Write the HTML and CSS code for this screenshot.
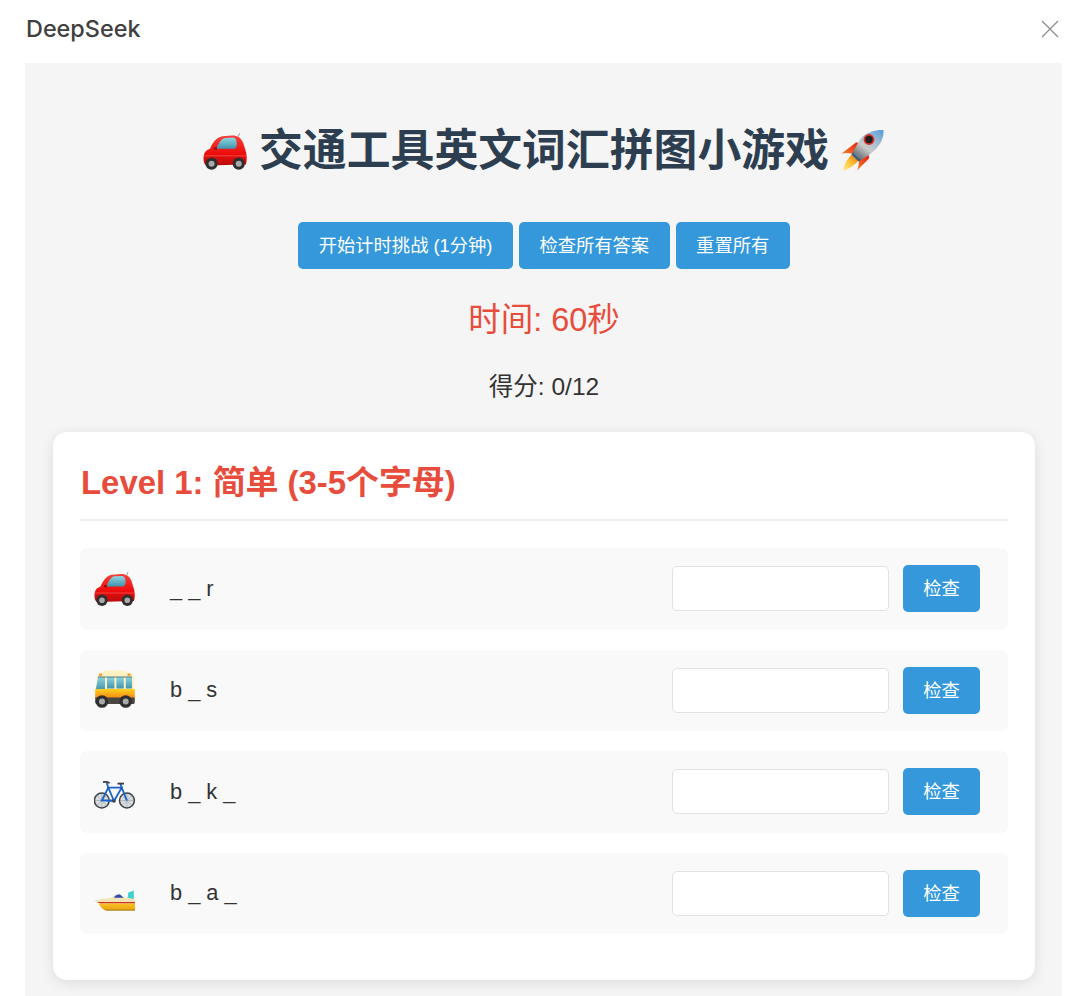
FILE: index.html

```html
<!DOCTYPE html>
<html lang="zh-CN">

<head>
  <meta charset="UTF-8">
  <meta name="viewport" content="width=device-width, initial-scale=1.0">
  <title>DeepSeek</title>
  <link rel="stylesheet" href="styles.css">
</head>

<body>
  <!-- emoji drawings -->
  <svg class="sprites" width="0" height="0" aria-hidden="true">
    <defs>
      <linearGradient id="red" x1="0" y1="0" x2="0" y2="1">
        <stop offset="0" stop-color="#f8403a" />
        <stop offset="0.6" stop-color="#ee0d0d" />
        <stop offset="1" stop-color="#b80b0b" />
      </linearGradient>
      <linearGradient id="glass" x1="0" y1="0" x2="0" y2="1">
        <stop offset="0" stop-color="#8fd6df" />
        <stop offset="1" stop-color="#3f93ad" />
      </linearGradient>
      <linearGradient id="yellow" x1="0" y1="0" x2="0" y2="1">
        <stop offset="0" stop-color="#ffd21f" />
        <stop offset="1" stop-color="#f58a12" />
      </linearGradient>
      <linearGradient id="hull" x1="0" y1="0" x2="0" y2="1">
        <stop offset="0" stop-color="#fcc226" />
        <stop offset="0.7" stop-color="#eda916" />
        <stop offset="1" stop-color="#a8801c" />
      </linearGradient>
      <linearGradient id="steel" x1="0.9" y1="0" x2="0.1" y2="1">
        <stop offset="0" stop-color="#5f9fdc" />
        <stop offset="0.35" stop-color="#a9c0d2" />
        <stop offset="0.6" stop-color="#c9cbc9" />
        <stop offset="1" stop-color="#50585e" />
      </linearGradient>
      <linearGradient id="fin" x1="1" y1="0" x2="0" y2="1">
        <stop offset="0" stop-color="#e3140f" />
        <stop offset="1" stop-color="#f9812a" />
      </linearGradient>
      <linearGradient id="flame" x1="1" y1="0" x2="0" y2="1">
        <stop offset="0" stop-color="#ef5a1a" />
        <stop offset="0.5" stop-color="#fbc02c" />
        <stop offset="1" stop-color="#fff2a8" />
      </linearGradient>
    </defs>

    <symbol id="car" viewBox="0 0 41 41">
      <path d="M33 7l1-3" stroke="#8a8a8a" stroke-width="0.8" />
      <path fill="url(#red)" d="M0.5 28C0.5 23 2 20 6.5 18.5 9 13 12 8 18 6.8L27 6C32 5.9 35.5 8 37.5 13L40.2 22C41 26 41 30 40 33L3 34C1 33 0.5 30 0.5 28Z" />
      <path fill="url(#glass)" d="M12.5 18.5C14.5 13 17 8.8 20.5 8.3L28 8C30.5 8 31.5 11 31.5 14C31.5 16 31 18 29 18.5Z" />
      <path d="M10 17h3v2.4h-3z" fill="#a80808" />
      <rect x="1" y="24.5" width="39" height="1" fill="#ff7a70" opacity="0.5" />
      <circle cx="8" cy="32.3" r="5.7" fill="#2f2f2f" />
      <circle cx="8" cy="32.3" r="2.8" fill="#a9a9a9" />
      <circle cx="33.3" cy="32.3" r="5.7" fill="#2f2f2f" />
      <circle cx="33.3" cy="32.3" r="2.8" fill="#a9a9a9" />
    </symbol>

    <symbol id="bus" viewBox="0 0 41 41">
      <path fill="#fdf0c2" d="M3 8C3.5 4 6 2.5 9 2.5L12 0.5H30L33 2.5C37 2.5 39.5 4 40 8L40.7 21H1.5Z" />
      <rect x="5" y="3.6" width="3" height="2.2" fill="#f29a1f" />
      <rect x="33.5" y="3.6" width="3" height="2.2" fill="#f29a1f" />
      <path fill="url(#glass)" d="M4 7H11V20H1.8Z" />
      <path fill="url(#glass)" d="M13 7H20.4V18.5H13ZM22.4 7H29.8V18.5H22.4ZM31.8 7H38V18.5H31.8Z" />
      <path d="M4 7H38" stroke="#23485a" stroke-width="0.7" />
      <path fill="url(#yellow)" d="M1.2 19H40.8V28H1.2Z" />
      <path fill="#4a4642" d="M1.2 27.5H40.8V32C40.8 33.5 40 34 39 34H3C2 34 1.2 33.5 1.2 32Z" />
      <circle cx="8" cy="31.5" r="6.3" fill="#2f2f2f" />
      <circle cx="8" cy="31.5" r="3" fill="#a9a9a9" />
      <circle cx="31.7" cy="31.5" r="6.3" fill="#2f2f2f" />
      <circle cx="31.7" cy="31.5" r="3" fill="#a9a9a9" />
    </symbol>

    <symbol id="bike" viewBox="0 0 41 41">
      <circle cx="7.8" cy="29.5" r="7.4" fill="#d9dde1" stroke="#3c3f44" stroke-width="1.5" />
      <circle cx="32.9" cy="29.5" r="7.4" fill="#d9dde1" stroke="#3c3f44" stroke-width="1.5" />
      <path d="M7.8 22.5V36.5M1 29.5H14.8M2.8 24.5L12.8 34.5M12.8 24.5L2.8 34.5M32.9 22.5V36.5M26 29.5H39.8M27.9 24.5L37.9 34.5M37.9 24.5L27.9 34.5" stroke="#8d9297" stroke-width="0.5" />
      <path d="M7.8 29.5L14.3 16.7H27.7L20 30ZM14.3 16.7L20 30M27.7 16.7L32.9 29.5M7.8 29.5H20" fill="none" stroke="#1a62c8" stroke-width="1.8" />
      <path d="M14.3 16.7L12.8 12M27.7 16.7L26.4 12.5" stroke="#1a62c8" stroke-width="1.8" />
      <path d="M9 11.2C11 10.8 14 11.2 15.6 12" stroke="#3b3b3b" stroke-width="1.8" fill="none" />
      <path d="M23.5 12.6H30" stroke="#3b3b3b" stroke-width="1.8" />
      <circle cx="20" cy="30" r="1.8" fill="#444" />
    </symbol>

    <symbol id="boat" viewBox="0 0 41 41">
      <path fill="#3fd0cf" d="M33 27.6L34.4 19.4 39.8 17.6V27.6Z" />
      <path fill="#e6e4dc" d="M17 27C18.5 23 21 20.5 25 20.7L31 24.5V27.6Z" />
      <path fill="#2a4aa8" d="M20 25C20.8 22.4 23 21.2 26 21.4L29.8 25Z" />
      <path fill="#f3e4b8" d="M0.3 27.7C7 26.6 12 25 18 24.8H34L41 26.2V30H5.5C3 29.7 1.5 29 0.3 27.7Z" />
      <path fill="#c8341f" d="M3 29H41V30.6H6Z" />
      <path fill="url(#hull)" d="M4.5 30.5H41V37.8H14C10 37.8 7 35 4.5 30.5Z" />
    </symbol>

    <symbol id="rocket" viewBox="0 0 44 44">
      <path fill="url(#fin)" d="M0.5 24.5L15 13.5 21 14 12 25C8 23.6 4 23.6 0.5 24.5Z" />
      <path fill="url(#fin)" d="M16 41.5C17.8 37.5 18.4 33.5 17.5 30L27.5 23 28 29.5Z" />
      <path fill="url(#flame)" d="M12 24.5L18.5 30C16 34 9 40 1.5 42 3 35 7.5 28 12 24.5Z" />
      <path fill="url(#steel)" d="M42.5 1C43 8 40 15 34.5 20.5 30 25 25 28 20 31L12 23C15 18 17 12.5 21.5 7.5 27 3 35 0.5 42.5 1Z" />
      <path fill="#3f5f82" d="M12 23L20 31 17.5 32.6 10.5 25.4Z" />
      <circle cx="28" cy="10.5" r="5.4" fill="#d9302a" />
      <circle cx="28" cy="10.5" r="3.7" fill="#1e1e1e" />
    </symbol>
  </svg>

  <div class="header">
    <div class="brand">DeepSeek</div>
    <svg class="close" viewBox="0 0 18 18" width="18" height="18">
      <path d="M1 1L17 17M17 1L1 17" />
    </svg>
  </div>

  <div class="frame">
    <h1 class="title">
      <svg class="title-car"><use href="#car" /></svg>
      <span>交通工具英文词汇拼图小游戏</span>
      <svg class="title-rocket"><use href="#rocket" /></svg>
    </h1>

    <div class="controls">
      <button class="btn">开始计时挑战 (1分钟)</button>
      <button class="btn">检查所有答案</button>
      <button class="btn">重置所有</button>
    </div>

    <div class="timer">时间: 60秒</div>
    <div class="score">得分: 0/12</div>

    <div class="card">
      <h2 class="level-title">Level 1: 简单 (3-5个字母)</h2>

      <div class="word-row">
        <svg class="word-icon"><use href="#car" /></svg>
        <div class="word-hint">_ _ r</div>
        <input class="word-input" type="text">
        <button class="btn btn-check">检查</button>
      </div>

      <div class="word-row">
        <svg class="word-icon"><use href="#bus" /></svg>
        <div class="word-hint">b _ s</div>
        <input class="word-input" type="text">
        <button class="btn btn-check">检查</button>
      </div>

      <div class="word-row">
        <svg class="word-icon"><use href="#bike" /></svg>
        <div class="word-hint">b _ k _</div>
        <input class="word-input" type="text">
        <button class="btn btn-check">检查</button>
      </div>

      <div class="word-row">
        <svg class="word-icon"><use href="#boat" /></svg>
        <div class="word-hint">b _ a _</div>
        <input class="word-input" type="text">
        <button class="btn btn-check">检查</button>
      </div>
    </div>
  </div>
</body>

</html>
```

FILE: styles.css

```css
* {
  box-sizing: border-box;
  margin: 0;
  padding: 0;
}

body {
  height: 996px;
  overflow: hidden;
  background: #fff;
  color: #333;
  font-family: "Liberation Sans", "Noto Sans CJK SC", sans-serif;
}

.sprites {
  display: block;
  height: 0;
}

.header {
  height: 63px;
  padding: 0 21px 5px 26px;
  display: flex;
  align-items: center;
  justify-content: space-between;
}

.brand {
  margin-bottom: 2px;
  font-family: "Inter", "Liberation Sans", sans-serif;
  font-size: 23.4px;
  font-weight: 500;
  color: #404040;
}

.close path {
  fill: none;
  stroke: #8c8c8c;
  stroke-width: 1.2;
}

.frame {
  height: 933px;
  margin: 0 18px 0 25px;
  padding: 63px 27px 0 28px;
  background: #f5f5f5;
  overflow: hidden;
}

.title {
  height: 50px;
  display: flex;
  align-items: center;
  justify-content: center;
  gap: 12px;
  font-size: 43.85px;
  line-height: 50px;
  font-weight: 700;
  color: #2c3e50;
}

.title-car {
  width: 44px;
  height: 44px;
}

.title-rocket {
  width: 44px;
  height: 44px;
}

.controls {
  margin-top: 46px;
  display: flex;
  justify-content: center;
  gap: 6px;
}

.btn {
  height: 47px;
  padding: 0 20.5px;
  border: 0;
  border-radius: 5px;
  background: #3498db;
  color: #fff;
  font-family: inherit;
  font-size: 18.3px;
  line-height: 47px;
}

.timer {
  margin-top: 31px;
  text-align: center;
  font-size: 32.5px;
  line-height: 40px;
  color: #e74c3c;
}

.score {
  margin-top: 32px;
  text-align: center;
  font-size: 24.5px;
  line-height: 30px;
}

.card {
  margin-top: 30px;
  padding: 28px 27px 46px;
  background: #fff;
  border-radius: 14px;
  box-shadow: 0 3px 14px rgba(0, 0, 0, 0.1);
}

.level-title {
  height: 61px;
  margin-bottom: 27px;
  border-bottom: 2px solid #eee;
  text-indent: 1px;
  font-size: 32.9px;
  line-height: 46px;
  font-weight: 700;
  color: #e74c3c;
}

.word-row {
  height: 81.5px;
  margin-top: 20px;
  padding: 0 28px 0 14px;
  display: flex;
  align-items: center;
  background: #f9f9f9;
  border-radius: 7px;
}

.level-title + .word-row {
  margin-top: 0;
}

.word-icon {
  width: 41px;
  height: 41px;
  flex: none;
}

.word-hint {
  flex: 1;
  margin-left: 35px;
  font-size: 21.8px;
}

.word-input {
  width: 217px;
  height: 45px;
  border: 1.5px solid #e2e2e2;
  border-radius: 5px;
  background: #fff;
}

.btn-check {
  width: 77px;
  margin-left: 14px;
  padding: 0;
}
```
